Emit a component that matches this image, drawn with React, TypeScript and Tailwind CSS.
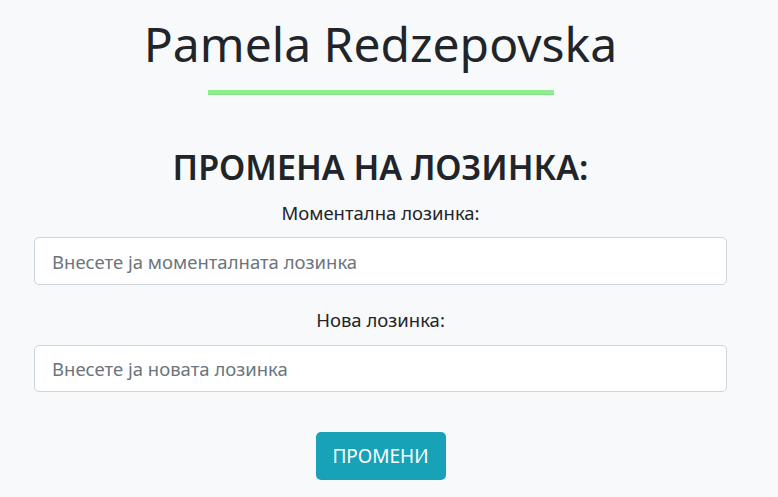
export default function App() {
  return (
    <div className="min-h-screen bg-[#f8f9fa] font-['Noto_Sans',sans-serif] text-[#212529]">
      <div className="flex flex-col items-center pl-[34px] pr-[51px] pt-[15px]">
        <h1 className="text-[48px] leading-[1.2] font-normal">Pamela Redzepovska</h1>
        <div className="mt-[17px] h-[5px] w-[346px] bg-[#90ee90] border-b border-[#86e286]"></div>
        <h2 className="mt-[52px] text-[34px] leading-[1.2] font-semibold">ПРОМЕНА НА ЛОЗИНКА:</h2>
        <form className="w-full flex flex-col items-center">
          <label className="mt-[12px] text-[18.5px] leading-[1.5]">Моментална лозинка:</label>
          <input
            type="password"
            placeholder="Внесете ја моменталната лозинка"
            className="mt-[10px] w-full h-[48px] px-[17px] bg-white border border-[#ced4da] rounded-[5px] text-[18.5px] placeholder:text-[#6c757d] outline-none"
          />
          <label className="mt-[21px] text-[18.5px] leading-[1.5]">Нова лозинка:</label>
          <input
            type="password"
            placeholder="Внесете ја новата лозинка"
            className="mt-[11px] w-full h-[47px] px-[17px] bg-white border border-[#ced4da] rounded-[5px] text-[18.5px] placeholder:text-[#6c757d] outline-none"
          />
          <button
            type="button"
            className="mt-[40px] w-[130px] h-[48px] bg-[#17a2b8] text-white text-[19px] rounded-[5px]"
          >
            ПРОМЕНИ
          </button>
        </form>
      </div>
    </div>
  );
}
